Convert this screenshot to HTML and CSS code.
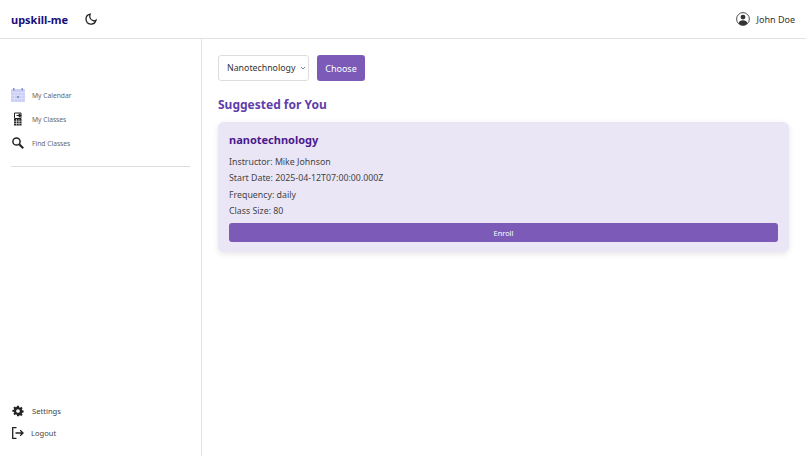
FILE: index.html
```html
<!DOCTYPE html>
<html lang="en">
<head>
    <meta charset="UTF-8">
    <meta name="viewport" content="width=device-width, initial-scale=1.0">
    <title>upskill-me</title>
    <link rel="stylesheet" href="styles.css">
</head>
<body>
    <!-- Top bar -->
    <header class="topbar">
        <div class="brand">
            <span class="logo">upskill-me</span>
            <svg class="moon" width="12" height="12" viewBox="0 0 14 14" fill="none" stroke="#222" stroke-width="1.500"><path d="M6 1.200a5.900 5.900 0 1 0 6.800 7.300c-.9.7-2.200.9-3.400.5C7 8.200 5.200 5.600 5.600 3.200 5.700 2.400 5.800 1.800 6 1.200z"/></svg>
        </div>
        <div class="user">
            <svg width="14" height="14" viewBox="0 0 16 16"><circle cx="8" cy="8" r="7.300" fill="none" stroke="#333" stroke-width="1"/><circle cx="8" cy="5.800" r="2.800" fill="#333"/><path d="M3 13c.4-2.600 2.400-3.700 5-3.700s4.600 1.100 5 3.700a7 7 0 0 1-10 0z" fill="#333"/></svg>
            <span>John Doe</span>
        </div>
    </header>

    <div class="layout">
        <!-- Sidebar -->
        <aside class="sidebar">
            <nav class="nav-list">
                <a class="nav-item">
                    <svg width="14" height="14" viewBox="0 0 14 14"><rect y="1" width="14" height="13" rx="1" fill="#ccd0f5"/><rect x="2" width="1.500" height="2.500" fill="#8d92c9"/><rect x="10.500" width="1.500" height="2.500" fill="#8d92c9"/><path d="M0 4.500h14M0 7.500h14M0 10.500h14M3.500 4v10M7 4v10M10.500 4v10" stroke="#e2e4fa" stroke-width=".6"/><rect x="6" y="8" width="2" height="2" fill="#8d92c9"/></svg>
                    <span>My Calendar</span>
                </a>
                <a class="nav-item">
                    <svg width="14" height="14" viewBox="0 0 14 14"><path d="M3.500 1h6.500v5.500H3.500z" fill="none" stroke="#222" stroke-width="1"/><path d="M5.500 3.500h4M7.700 1.800l2 1.700-2 1.700" fill="none" stroke="#222" stroke-width="1.200"/><path d="M3 7h7.500v6.500H3z" fill="#222"/><path d="M3 9.200h7.500M3 11.400h7.500M5.500 7v6.500M8 7v6.500" stroke="#fff" stroke-width=".6"/></svg>
                    <span>My Classes</span>
                </a>
                <a class="nav-item">
                    <svg width="14" height="14" viewBox="0 0 14 14" fill="none" stroke="#222"><circle cx="5.500" cy="5.500" r="3.600" stroke-width="1.500"/><path d="M8.200 8.200l4 4" stroke-width="2"/></svg>
                    <span>Find Classes</span>
                </a>
            </nav>
            <hr class="side-rule">
            <div class="side-bottom">
                <a class="bottom-item">
                    <svg width="14" height="14" viewBox="-3 -3 30 30"><path fill="#222" fill-rule="evenodd" d="M10 1h4l.6 3.100 1.900.8L19.100 3.100l2.800 2.800-1.800 2.600.8 1.900 3.100.6v4l-3.100.6-.8 1.900 1.800 2.600-2.800 2.800-2.600-1.800-1.900.8L14 23h-4l-.6-3.100-1.900-.8-2.600 1.800-2.800-2.800 1.800-2.600-.8-1.900L0 14v-4l3.100-.6.8-1.900-1.800-2.600 2.800-2.800 2.600 1.800 1.900-.8zM12 8a4 4 0 1 0 0 8 4 4 0 0 0 0-8z"/></svg>
                    <span>Settings</span>
                </a>
                <a class="bottom-item logout">
                    <svg width="14" height="14" viewBox="0 0 14 14" fill="none" stroke="#222" stroke-width="1.300"><path d="M5.500 1.700H1.700v10.600h3.800M4.500 7h7.500M9.200 4.300 12 7l-2.800 2.700"/></svg>
                    <span>Logout</span>
                </a>
            </div>
        </aside>

        <!-- Main content -->
        <main class="content">
            <div class="picker">
                <select class="topic-select">
                    <option>Nanotechnology</option>
                </select>
                <button class="choose-btn">Choose</button>
            </div>
            <h2 class="section-title">Suggested for You</h2>
            <section class="class-card">
                <h3>nanotechnology</h3>
                <p>Instructor: Mike Johnson</p>
                <p>Start Date: 2025-04-12T07:00:00.000Z</p>
                <p>Frequency: daily</p>
                <p>Class Size: 80</p>
                <button class="enroll-btn">Enroll</button>
            </section>
        </main>
    </div>
</body>
</html>
```

FILE: styles.css
```css
* {
    box-sizing: border-box;
}
html, body {
    height: 100%;
}
body {
    margin: 0;
    font-family: "Noto Sans", "Open Sans", sans-serif;
    color: #333;
    background-color: #fff;
    overflow: hidden;
}
.topbar {
    display: flex;
    justify-content: space-between;
    align-items: center;
    height: 39px;
    padding: 0 11px;
    border-bottom: 1px solid #e2e2e2;
}
.brand {
    display: flex;
    align-items: center;
    gap: 17px;
}
.logo {
    font-size: 11px;
    font-weight: 700;
    color: #16107a;
}
.user {
    display: flex;
    align-items: center;
    gap: 7px;
    font-size: 9px;
    color: #333;
}
.layout {
    display: flex;
    height: 417px;
}
.sidebar {
    display: flex;
    flex-direction: column;
    width: 202px;
    padding: 49px 11px 16px;
    border-right: 1px solid #e2e2e2;
}
.nav-list {
    display: flex;
    flex-direction: column;
    gap: 10px;
}
.nav-item {
    display: flex;
    align-items: center;
    gap: 7px;
    height: 14px;
    font-size: 6.700px;
    color: #666;
}
.side-rule {
    width: 100%;
    margin: 16px 0 0;
    border: 0;
    border-top: 1px solid #ddd;
}
.side-bottom {
    display: flex;
    flex-direction: column;
    gap: 8px;
    margin-top: auto;
}
.bottom-item {
    display: flex;
    align-items: center;
    gap: 7px;
    height: 14px;
    font-size: 7.600px;
    color: #444;
}
.logout {
    gap: 6px;
}
.content {
    flex: 1;
    padding: 16px 16px 0;
}
.picker {
    display: flex;
    gap: 8px;
}
.topic-select {
    appearance: none;
    width: 91px;
    height: 26px;
    padding: 0 12px 0 8px;
    font-family: inherit;
    font-size: 8.800px;
    color: #333;
    background: #fff url("data:image/svg+xml,%3Csvg xmlns='http://www.w3.org/2000/svg' width='6' height='4'%3E%3Cpath d='M1 1l2 2 2-2' fill='none' stroke='%23666' stroke-width='.8'/%3E%3C/svg%3E") no-repeat right 2px center;
    border: 1px solid #ddd;
    border-radius: 3px;
}
.choose-btn {
    width: 48px;
    height: 26px;
    padding: 0;
    font-family: inherit;
    font-size: 9px;
    color: #fff;
    background-color: #7b5ab8;
    border: 0;
    border-radius: 3px;
}
.section-title {
    margin: 15px 0 8px;
    font-size: 12px;
    line-height: 18px;
    font-weight: 700;
    color: #5f3dab;
}
.class-card {
    width: 571px;
    padding: 10px 11px;
    background-color: #ebe6f6;
    border-radius: 6px;
    box-shadow: 0 2px 6px rgba(0, 0, 0, 0.1);
}
.class-card h3 {
    margin: 0 0 6px;
    font-size: 11px;
    line-height: 16px;
    font-weight: 700;
    color: #4a1a8c;
}
.class-card p {
    margin: 0;
    font-size: 8.800px;
    line-height: 16.300px;
    color: #444;
}
.enroll-btn {
    display: block;
    width: 100%;
    height: 19px;
    margin-top: 4px;
    padding: 0;
    font-family: inherit;
    font-size: 7.400px;
    color: #fff;
    background-color: #7b5ab8;
    border: 0;
    border-radius: 3px;
}
```
